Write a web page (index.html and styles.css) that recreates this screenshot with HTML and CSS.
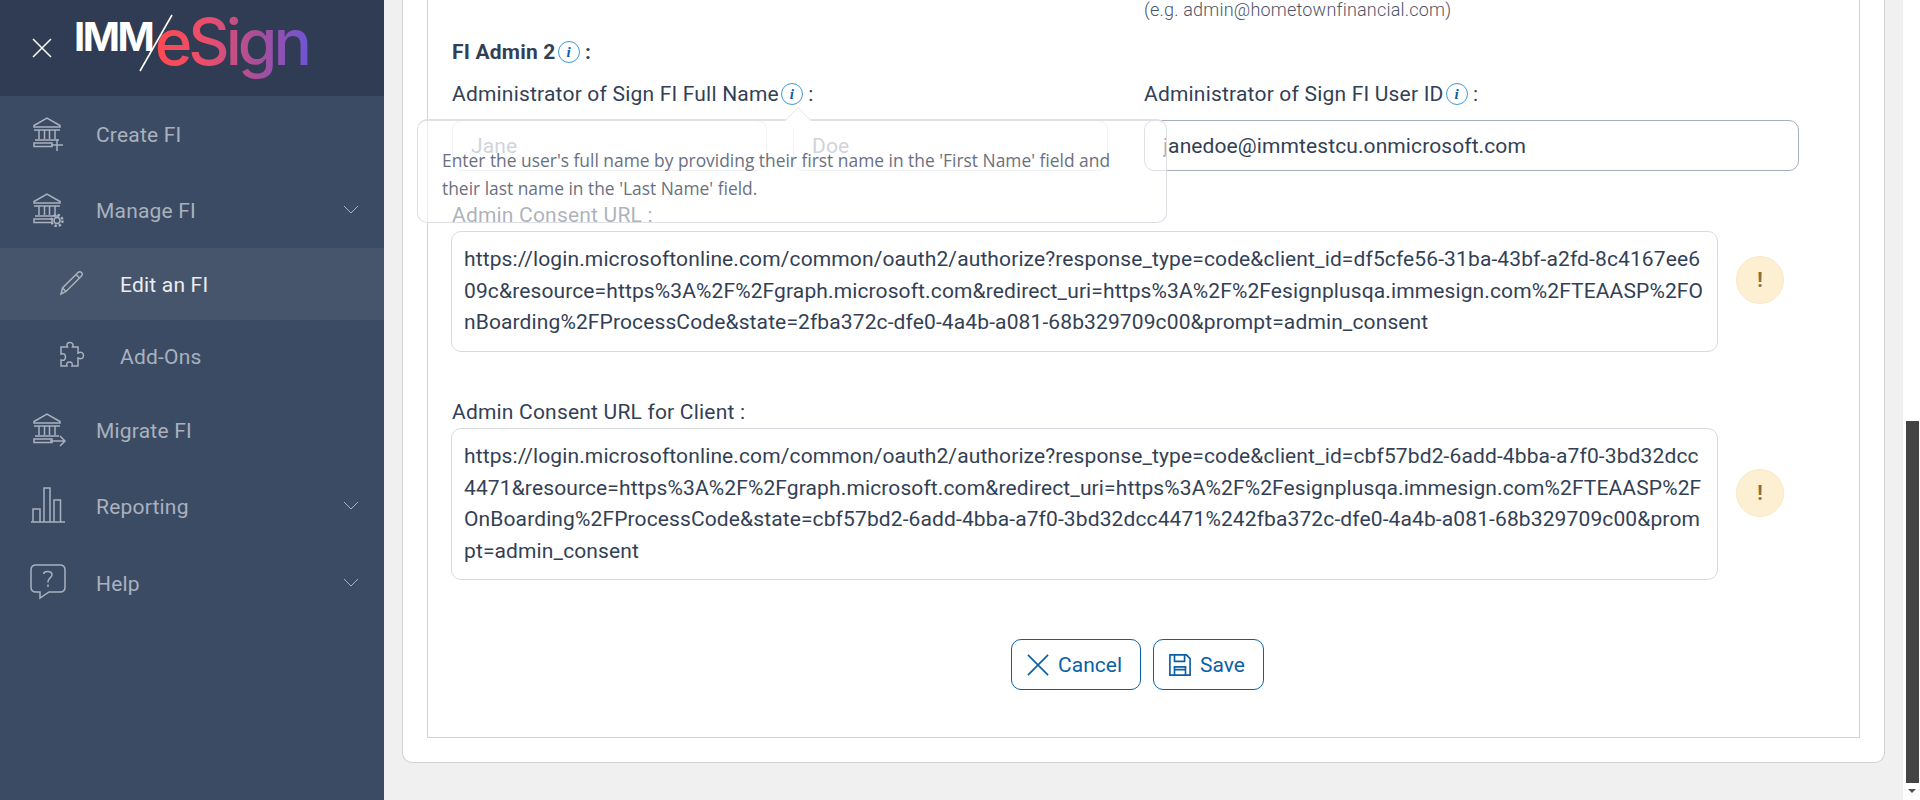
FILE: index.html
```html
<!DOCTYPE html>
<html lang="en">
  <head>
    <meta charset="UTF-8" />
    <meta name="viewport" content="width=device-width, initial-scale=1.0" />
    <title>IMM eSign - Edit an FI</title>
    <link rel="stylesheet" href="styles.css">
  </head>
  <body>
    <svg class="icon-defs" width="0" height="0">
      <symbol id="bank" viewBox="0 0 36 36">
        <path d="M4 10.500 17 3l13 7.500v1.500H4z" />
        <path d="M4 15h26M9 15v9M14.500 15v9M19.500 15v9M25 15v9M5 25h24" />
        <path d="M4 28h18v3.500H4z" />
      </symbol>
    </svg>

    <div class="layout">
      <aside class="sidebar">
        <div class="brand">
          <svg class="brand-close" width="20" height="20" viewBox="0 0 20 20">
            <path d="M1 1l18 18M19 1 1 19" />
          </svg>
          <div class="logo">
            <span class="logo-imm">IMM</span>
            <svg class="logo-slash" width="36" height="58" viewBox="0 0 36 58">
              <path d="M34 1 2 57" />
            </svg>
            <span class="logo-esign">eSign</span>
          </div>
        </div>

        <nav class="nav">
          <a class="nav-item">
            <span class="nav-icon">
              <svg width="36" height="36" viewBox="0 0 36 36">
                <use href="#bank" />
                <path d="M27 24v12M21 30h12" />
              </svg>
            </span>
            Create FI
          </a>
          <a class="nav-item">
            <span class="nav-icon">
              <svg width="36" height="36" viewBox="0 0 36 36">
                <use href="#bank" />
                <circle cx="27" cy="29.500" r="3" />
                <circle cx="27" cy="29.500" r="5.500" stroke-dasharray="2.400 1.900" stroke-width="2.400" />
              </svg>
            </span>
            Manage FI
            <svg class="chevron" width="16" height="10" viewBox="0 0 16 10"><path d="M1 1l7 7 7-7" /></svg>
          </a>
          <a class="nav-item sub active">
            <span class="nav-icon">
              <svg width="28" height="28" viewBox="0 0 28 28">
                <path d="M3 25l1.500-6L20 3.500c1-1 2.500-1 3.500 0s1 2.500 0 3.500L8 22.500z" />
                <path d="M4.500 19 8 22.500M18 5.500 22 9.500" />
              </svg>
            </span>
            Edit an FI
          </a>
          <a class="nav-item sub">
            <span class="nav-icon">
              <svg width="28" height="28" viewBox="0 0 28 28">
                <path d="M3 6h6.500C8 3 9.500 1.500 12 1.500S16 3.500 14.500 6H20v6c3-1.500 5.500-.5 5.500 2.500S23 18.500 20 17v8h-6c1-3-.5-4-2.500-4S8 22 9 25H3v-6c3 1 4.500-.5 4.500-3S6 12 3 13z" />
              </svg>
            </span>
            Add-Ons
          </a>
          <a class="nav-item">
            <span class="nav-icon">
              <svg width="36" height="36" viewBox="0 0 36 36">
                <use href="#bank" />
                <path d="M20 30h15M30 25l5 5-5 5" />
              </svg>
            </span>
            Migrate FI
          </a>
          <a class="nav-item">
            <span class="nav-icon">
              <svg width="36" height="36" viewBox="0 0 36 36">
                <path d="M1 35h34M3 35V22h7v13M14 35V1h6v34M24 35V13h6.500v22" />
              </svg>
            </span>
            Reporting
            <svg class="chevron" width="16" height="10" viewBox="0 0 16 10"><path d="M1 1l7 7 7-7" /></svg>
          </a>
          <a class="nav-item">
            <span class="nav-icon">
              <svg width="36" height="36" viewBox="0 0 36 36">
                <path d="M6 1h24c3 0 5 2 5 5v17c0 3-2 5-5 5H19l-9 6v-6H6c-3 0-5-2-5-5V6c0-3 2-5 5-5z" />
                <path d="M13.500 10c.5-3 7.500-3.500 8.500 0 .8 3.500-4 4-4 7.500v1M18 20.500v2.500" />
              </svg>
            </span>
            Help
            <svg class="chevron" width="16" height="10" viewBox="0 0 16 10"><path d="M1 1l7 7 7-7" /></svg>
          </a>
        </nav>
      </aside>

      <main class="main">
        <div class="card">
          <div class="panel">
            <div class="hint-row">
              <div></div>
              <div class="hint">(e.g. admin@hometownfinancial.com)</div>
            </div>

            <div class="section-title">FI Admin 2<span class="info">i</span> :</div>

            <div class="name-grid">
              <div class="field">
                <label class="field-label">Administrator of Sign FI Full Name<span class="info">i</span> :</label>
                <div class="name-inputs">
                  <input class="input" type="text" placeholder="Jane" />
                  <input class="input" type="text" placeholder="Doe" />
                </div>
                <div class="popover">
                  <span class="popover-arrow"></span>
                  Enter the user's full name by providing their first name in the 'First Name' field and their last name in the 'Last Name' field.
                </div>
              </div>
              <div class="field">
                <label class="field-label">Administrator of Sign FI User ID<span class="info">i</span> :</label>
                <input class="input filled" type="text" value="janedoe@immtestcu.onmicrosoft.com" />
              </div>
            </div>

            <div class="consent first">
              <div class="consent-main">
                <label class="field-label">Admin Consent URL :</label>
                <div class="url-box">https://login.microsoftonline.com/common/oauth2/authorize?response_type=code&amp;client_id=df5cfe56-31ba-43bf-a2fd-8c4167ee609c&amp;resource=https%3A%2F%2Fgraph.microsoft.com&amp;redirect_uri=https%3A%2F%2Fesignplusqa.immesign.com%2FTEAASP%2FOnBoarding%2FProcessCode&amp;state=2fba372c-dfe0-4a4b-a081-68b329709c00&amp;prompt=admin_consent</div>
              </div>
              <span class="warn">!</span>
            </div>

            <div class="consent second">
              <div class="consent-main">
                <label class="field-label">Admin Consent URL for Client :</label>
                <div class="url-box">https://login.microsoftonline.com/common/oauth2/authorize?response_type=code&amp;client_id=cbf57bd2-6add-4bba-a7f0-3bd32dcc4471&amp;resource=https%3A%2F%2Fgraph.microsoft.com&amp;redirect_uri=https%3A%2F%2Fesignplusqa.immesign.com%2FTEAASP%2FOnBoarding%2FProcessCode&amp;state=cbf57bd2-6add-4bba-a7f0-3bd32dcc4471%242fba372c-dfe0-4a4b-a081-68b329709c00&amp;prompt=admin_consent</div>
              </div>
              <span class="warn">!</span>
            </div>

            <div class="actions">
              <button class="btn" type="button">
                <svg width="22" height="22" viewBox="0 0 24 24"><path d="M1 1l22 22M23 1 1 23" /></svg>
                Cancel
              </button>
              <button class="btn" type="button">
                <svg width="22" height="22" viewBox="0 0 24 24">
                  <path d="M1 1h18l4 4v18H1z" />
                  <path d="M6 1v7h11V1M6 23v-9h12v9M6 17h12" />
                </svg>
                Save
              </button>
            </div>
          </div>
        </div>
      </main>

      <div class="scrollbar">
        <div class="scroll-track"></div>
        <div class="scroll-thumb"></div>
        <span class="scroll-arrow"></span>
      </div>
    </div>
  </body>
</html>
```

FILE: styles.css
```css
* {
  margin: 0;
  padding: 0;
  box-sizing: border-box;
}

body {
  font-family: Roboto, Arial, sans-serif;
  font-size: 21px;
  letter-spacing: 0.2px;
  color: #333f55;
  background-color: #f0f0f0;
  height: 800px;
  overflow: hidden;
}

.icon-defs {
  position: absolute;
}

.layout {
  display: flex;
  height: 800px;
}

/* Sidebar */
.sidebar {
  width: 384px;
  flex-shrink: 0;
  background-color: #3c4b64;
}

.brand {
  height: 96px;
  background-color: #303c54;
  display: flex;
  align-items: center;
  padding-left: 32px;
}

.brand-close {
  fill: none;
  stroke: #fff;
  stroke-width: 1.5;
}

.logo {
  display: flex;
  position: relative;
  align-items: flex-start;
  margin-left: 22px;
  height: 96px;
}

.logo-imm {
  font-family: Inter, Roboto, sans-serif;
  font-size: 40px;
  font-weight: 700;
  letter-spacing: -2.500px;
  color: #fff;
  line-height: 40px;
  margin-top: 17px;
}

.logo-slash {
  position: absolute;
  left: 64px;
  top: 14px;
  fill: none;
  stroke: #fff;
  stroke-width: 1.6;
}

.logo-esign {
  font-family: Inter, Roboto, sans-serif;
  font-size: 64px;
  font-weight: 500;
  letter-spacing: -4px;
  line-height: 90px;
  margin-left: 2.500px;
  margin-top: -3px;
  background-image: linear-gradient(90deg, #ff4a4f 0%, #e84e6e 35%, #a24f9e 70%, #6f55d3 100%);
  -webkit-background-clip: text;
  background-clip: text;
  color: transparent;
}

.nav-item {
  display: flex;
  align-items: center;
  height: 76px;
  padding-top: 2px;
  padding-left: 30px;
  color: #a9b1be;
}

.nav-item:last-child {
  padding-top: 4px;
}

.nav-icon {
  width: 66px;
  flex-shrink: 0;
  display: flex;
  align-items: center;
  margin-top: -4px;
}

.nav-icon svg {
  fill: none;
  stroke: #a9b1be;
  stroke-width: 1.5;
  display: block;
}

.nav-item.sub {
  height: 72px;
  padding-left: 58px;
}

.nav-item.sub .nav-icon {
  width: 62px;
}

.nav-item.active {
  background-color: #46556c;
  color: #ebedf0;
}

.chevron {
  margin-left: auto;
  margin-right: 25px;
  margin-top: -2px;
  fill: none;
  stroke: #a9b1be;
  stroke-width: 1;
}

/* Main area */
.main {
  flex: 1;
  padding: 0 18px 37px 18px;
  min-width: 0;
}

.card {
  height: 100%;
  background-color: #fff;
  border: 1px solid #d2d2d2;
  border-top: none;
  border-radius: 0 0 10px 10px;
  padding: 0 24px 24px;
}

.panel {
  height: 100%;
  border: 1px solid #d2d2d2;
  border-top: none;
  padding: 0 24px;
}

.hint-row,
.name-grid {
  display: grid;
  grid-template-columns: 656px 656px;
  column-gap: 36px;
}

.hint {
  font-size: 18px;
  font-weight: 300;
  letter-spacing: 0.2px;
  line-height: 20px;
  height: 18px;
  color: #4b5568;
  white-space: nowrap;
}

.section-title {
  font-weight: 700;
  height: 26px;
  line-height: 26px;
  margin-top: 21px;
}

.info {
  display: inline-block;
  width: 22px;
  height: 22px;
  margin-left: 2px;
  border: 1px solid #3d9bdc;
  border-radius: 50%;
  color: #0a5ea8;
  font-family: "Liberation Serif", serif;
  font-size: 15px;
  font-style: italic;
  font-weight: 700;
  line-height: 20px;
  text-align: center;
  vertical-align: 2px;
}

.name-grid {
  margin-top: 16px;
}

.field {
  position: relative;
}

.field-label {
  display: block;
  height: 26px;
  line-height: 26px;
  margin-bottom: 13px;
  white-space: nowrap;
}

.name-inputs {
  display: flex;
  gap: 26px;
}

.input {
  display: block;
  width: 315px;
  height: 51px;
  padding: 0 18px;
  border: 1px solid #d8dbe0;
  border-radius: 10px;
  font-family: Roboto, Arial, sans-serif;
  font-size: 21px;
  letter-spacing: 0.1px;
  color: #333f55;
  background-color: #fff;
}

.input::placeholder {
  color: #8a93a2;
  opacity: 1;
}

.input.filled {
  width: 655px;
  border-color: #a7aebb;
}

/* Tooltip lies over the fields */
.popover {
  position: absolute;
  left: -35px;
  top: 38px;
  width: 750px;
  height: 104px;
  padding: 25px 24px 0;
  font-family: "Open Sans", sans-serif;
  font-size: 17.400px;
  letter-spacing: 0;
  line-height: 28px;
  color: #6b7080;
  background-color: rgba(255, 255, 255, 0.6);
  border: 1px solid #dddfe4;
  border-top: 2px solid #dfe1e6;
  border-radius: 10px;
  z-index: 2;
}

.popover-arrow {
  position: absolute;
  left: 368px;
  top: -13px;
  width: 24px;
  height: 24px;
  background-color: #fff;
  border-top: 1px solid #e3e5e9;
  border-left: 1px solid #e3e5e9;
  transform: rotate(45deg) scale(0.75);
}

.consent {
  display: flex;
  align-items: center;
}

.consent.first {
  margin-top: 31px;
}

.consent.second {
  margin-top: 47.500px;
}

.consent .field-label {
  margin-bottom: 3px;
}

.url-box {
  width: 1267px;
  margin-left: -1px;
  padding: 12px;
  border: 1px solid #d8dbe0;
  border-radius: 10px;
  line-height: 31.500px;
  letter-spacing: 0.12px;
  word-break: break-all;
  background-color: #fff;
}

.warn {
  width: 48px;
  height: 48px;
  margin-left: 18px;
  margin-top: 6px;
  flex-shrink: 0;
  border-radius: 50%;
  border: 1px solid #fbe8c4;
  background-color: #fdefd1;
  color: #8a6d3b;
  font-weight: 700;
  font-size: 20px;
  line-height: 46px;
  text-align: center;
}

.actions {
  display: flex;
  justify-content: center;
  gap: 12px;
  margin-top: 59px;
  padding-right: 12px;
}

.btn {
  display: flex;
  align-items: center;
  gap: 9px;
  height: 51px;
  padding: 0 18px 0 15px;
  border: 1px solid #0b5fa5;
  border-radius: 10px;
  background-color: #fff;
  color: #0b5fa5;
  font-family: Roboto, Arial, sans-serif;
  font-size: 21px;
}

.btn svg {
  fill: none;
  stroke: #0b5fa5;
  stroke-width: 1.8;
}

/* Scrollbar */
.scrollbar {
  width: 17px;
  flex-shrink: 0;
  background-color: #fff;
  display: flex;
  flex-direction: column;
  align-items: center;
  position: relative;
}

.scroll-track {
  height: 421px;
}

.scroll-thumb {
  width: 13px;
  height: 362px;
  margin-left: 1px;
  background-color: #444;
}

.scroll-arrow {
  margin-top: 6px;
  margin-left: 1px;
  border-left: 4px solid transparent;
  border-right: 4px solid transparent;
  border-top: 4px solid #505050;
}
```
